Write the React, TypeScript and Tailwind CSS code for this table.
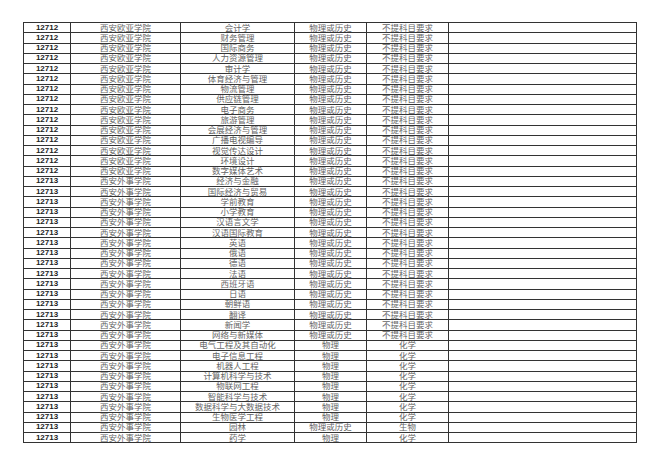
import React from 'react';

type Row = [string, string, string, string, string];

const ouya = '西安欧亚学院';
const waishi = '西安外事学院';
const either = '物理或历史';
const none = '不提科目要求';

const ouyaMajors = [
  '会计学', '财务管理', '国际商务', '人力资源管理', '审计学', '体育经济与管理', '物流管理',
  '供应链管理', '电子商务', '旅游管理', '会展经济与管理', '广播电视编导', '视觉传达设计',
  '环境设计', '数字媒体艺术',
];

const waishiOpen = [
  '经济与金融', '国际经济与贸易', '学前教育', '小学教育', '汉语言文学', '汉语国际教育', '英语',
  '俄语', '德语', '法语', '西班牙语', '日语', '朝鲜语', '翻译', '新闻学', '网络与新媒体',
];

const rows: Row[] = [
  ...ouyaMajors.map((m): Row => ['12712', ouya, m, either, none]),
  ...waishiOpen.map((m): Row => ['12713', waishi, m, either, none]),
  ['12713', waishi, '电气工程及其自动化', '物理', '化学'],
  ['12713', waishi, '电子信息工程', '物理', '化学'],
  ['12713', waishi, '机器人工程', '物理', '化学'],
  ['12713', waishi, '计算机科学与技术', '物理', '化学'],
  ['12713', waishi, '物联网工程', '物理', '化学'],
  ['12713', waishi, '智能科学与技术', '物理', '化学'],
  ['12713', waishi, '数据科学与大数据技术', '物理', '化学'],
  ['12713', waishi, '生物医学工程', '物理', '化学'],
  ['12713', waishi, '园林', either, '生物'],
  ['12713', waishi, '药学', '物理', '化学'],
];

const cell = 'flex items-center justify-center border-r border-[#333] overflow-visible whitespace-nowrap';
const cjk = "font-['Liberation_Serif','Noto_Sans_CJK_SC',serif] text-[8.5px] leading-[8px] text-[#666]";

export default function App() {
  return (
    <div className="w-[660px] h-[466px] bg-white pl-[23px] pt-[22px]">
      <div className="w-[614px] border-l border-t border-[#333]">
        {rows.map((r, i) => (
          <div
            key={i}
            className="grid grid-cols-[47px_110px_114px_72px_82px_188px] h-[10.25px] border-b border-[#333]"
          >
            <div className={cell}>
              <span className="font-['Liberation_Sans',sans-serif] font-bold text-[8px] leading-[8px] text-[#222]">
                {r[0]}
              </span>
            </div>
            <div className={cell}><span className={cjk}>{r[1]}</span></div>
            <div className={cell}><span className={cjk}>{r[2]}</span></div>
            <div className={cell}><span className={cjk}>{r[3]}</span></div>
            <div className={cell}><span className={cjk}>{r[4]}</span></div>
            <div className={cell} />
          </div>
        ))}
      </div>
    </div>
  );
}
